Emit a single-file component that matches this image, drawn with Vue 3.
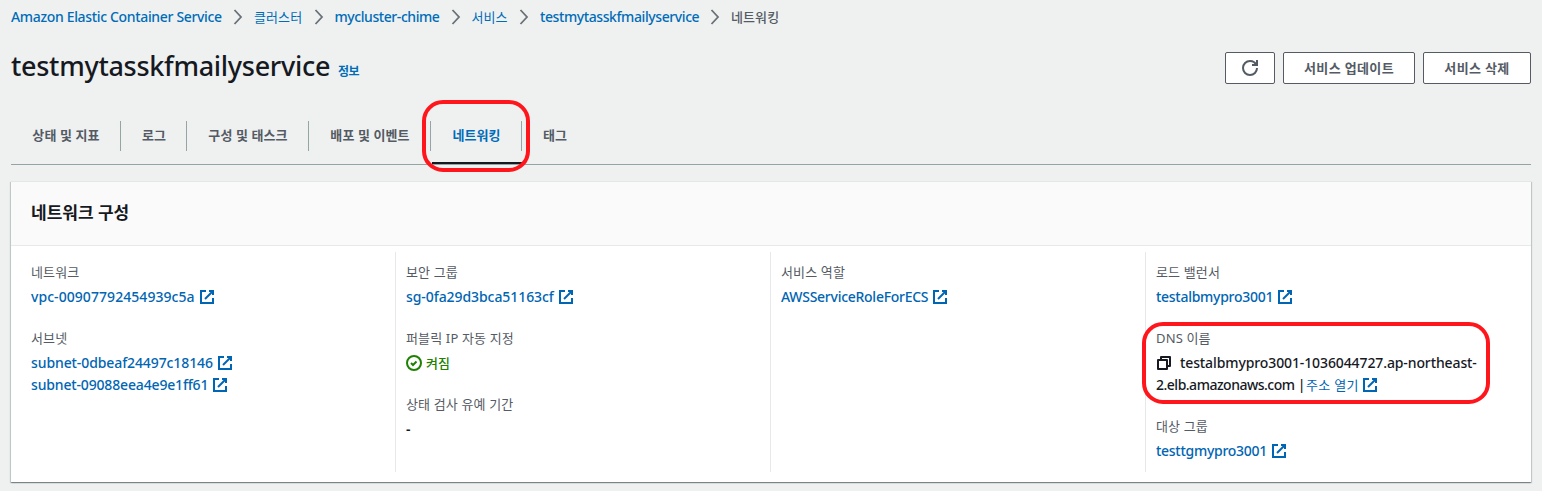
<script setup>
import { h } from 'vue'

const crumbs = [
  { text: 'Amazon Elastic Container Service', track: -0.34, width: 211 },
  { text: '클러스터', ko: true, track: 0.1, width: 48.5 },
  { text: 'mycluster-chime', track: -0.43, width: 105 },
  { text: '서비스', ko: true, track: 0.1, width: 36.5 },
  { text: 'testmytasskfmailyservice', track: -0.41, width: 159 },
  { text: '네트워킹', ko: true, track: 0.1, width: 50, current: true },
]

const tabs = [
  { text: '상태 및 지표', width: 110 },
  { text: '로그', width: 66 },
  { text: '구성 및 태스크', width: 122 },
  { text: '배포 및 이벤트', width: 122 },
  { text: '네트워킹', width: 91, active: true },
  { text: '태그', width: 66 },
]

const columns = [
  [
    { label: '네트워크', links: [{ text: 'vpc-00907792454939c5a', track: 0.06 }] },
    {
      label: '서브넷',
      links: [
        { text: 'subnet-0dbeaf24497c18146', track: -0.1 },
        { text: 'subnet-09088eea4e9e1ff61', track: -0.16 },
      ],
    },
  ],
  [
    { label: '보안 그룹', links: [{ text: 'sg-0fa29d3bca51163cf', track: -0.07 }] },
    { label: '퍼블릭 IP 자동 지정', status: '켜짐' },
    { label: '상태 검사 유예 기간', plain: '-' },
  ],
  [{ label: '서비스 역할', links: [{ text: 'AWSServiceRoleForECS', track: -0.27 }] }],
  [
    { label: '로드 밸런서', links: [{ text: 'testalbmypro3001', track: -0.28 }] },
    { label: 'DNS 이름', dns: true },
    { label: '대상 그룹', links: [{ text: 'testtgmypro3001', track: -0.28 }] },
  ],
]

const shapes = {
  external: ['M10 2h4v4', 'M6 10l8-8', 'M14 9.048V14H2V2h5'],
  refresh: ['M10 5h5V0', 'M15 8a7 7 0 0 1-14 0 7 7 0 0 1 7-7 6.87 6.87 0 0 1 6.3 4'],
  copy: ['M2 5h9v9H2z', 'M5 5V2h9v9h-3'],
  check: ['M8 1a7 7 0 1 0 0 14A7 7 0 0 0 8 1z', 'm5 8 2 2 3.521-3.521'],
  chevron: ['M4.500 1 11 8l-6.500 7'],
}
const Icon = ({ name }) =>
  h(
    'svg',
    {
      viewBox: '0 0 16 16',
      width: 16,
      height: 16,
      fill: 'none',
      stroke: 'currentColor',
      'stroke-width': name === 'chevron' ? 1.8 : 2,
      'stroke-linejoin': name === 'copy' ? 'round' : 'miter',
    },
    shapes[name].map((d) => h('path', { d })),
  )
Icon.props = ['name']

const spacing = (track) => ({ letterSpacing: `${track}px` })
</script>

<template>
  <div class="page">
    <nav class="crumbs">
      <template v-for="(c, i) in crumbs" :key="c.text">
        <Icon v-if="i" name="chevron" class="chevron" />
        <a
          class="crumb"
          :class="{ ko: c.ko, current: c.current }"
          :style="{ width: `${c.width}px`, letterSpacing: `${c.track}px` }"
          >{{ c.text }}</a
        >
      </template>
    </nav>

    <header class="head">
      <h1>testmytasskfmailyservice</h1>
      <a class="info">정보</a>
      <div class="actions">
        <button class="btn refresh"><Icon name="refresh" /></button>
        <button class="btn update">서비스 업데이트</button>
        <button class="btn remove">서비스 삭제</button>
      </div>
    </header>

    <div class="tabs">
      <div
        v-for="t in tabs"
        :key="t.text"
        class="tab"
        :class="{ active: t.active }"
        :style="{ width: `${t.width}px` }"
      >
        <span>{{ t.text }}</span>
        <i v-if="t.active" class="mark mark-tab"></i>
      </div>
    </div>

    <section class="panel">
      <div class="panel-head"><h2>네트워크 구성</h2></div>
      <div class="grid">
        <div v-for="(col, i) in columns" :key="i" class="col">
          <div v-for="f in col" :key="f.label" class="field">
            <div class="label">{{ f.label }}</div>
            <div v-for="l in f.links" :key="l.text" class="value link">
              <span :style="spacing(l.track)">{{ l.text }}</span>
              <Icon name="external" />
            </div>
            <div v-if="f.status" class="value status"><Icon name="check" /><span>{{ f.status }}</span></div>
            <div v-if="f.plain" class="value plain">{{ f.plain }}</div>
            <template v-if="f.dns">
              <div class="value dns">
                <Icon name="copy" />
                <span class="host">testalbmypro3001-1036044727.ap-northeast-</span>
              </div>
              <div class="value dns-tail">
                <span class="domain">2.elb.amazonaws.com |</span>
                <a class="open">주소 열기</a>
                <Icon name="external" class="blue" />
              </div>
              <i class="mark mark-dns"></i>
            </template>
          </div>
        </div>
      </div>
    </section>
  </div>
</template>

<style>
body {
  background: #eff1f1;
}
</style>

<style scoped>
* {
  box-sizing: border-box;
}
.page {
  height: 491px;
  padding: 0 11px;
  overflow: hidden;
  background: #eff1f1;
  color: #16191f;
  font: 500 14px/22px 'Noto Sans', 'Noto Sans CJK KR', sans-serif;
  white-space: nowrap;
}
svg {
  display: block;
  flex: none;
}
.crumbs {
  display: flex;
  align-items: center;
  height: 34px;
}
.crumb {
  flex: none;
  color: #006cb8;
}
.crumb.ko {
  font-size: 13px;
  font-weight: 400;
}
.crumb.current {
  color: #545b64;
  font-weight: 500;
}
.chevron {
  margin: 0 8px;
  color: #687078;
}
.head {
  display: flex;
  align-items: baseline;
  height: 68px;
  padding-top: 14px;
}
h1 {
  margin: 0;
  width: 327px;
  font-size: 27px;
  line-height: 36px;
  font-weight: 500;
  letter-spacing: -0.29px;
}
.info {
  color: #006cb8;
  font-size: 12px;
  font-weight: 700;
  letter-spacing: -0.5px;
}
.actions {
  display: flex;
  align-self: flex-start;
  gap: 8px;
  margin: 4px 0 0 auto;
}
.btn {
  display: flex;
  align-items: center;
  justify-content: center;
  height: 32px;
  padding: 0 0 1px;
  border: 1px solid #545b64;
  border-radius: 2px;
  background: #fff;
  color: #545b64;
  font: 700 13px/20px 'Noto Sans', 'Noto Sans CJK KR', sans-serif;
  letter-spacing: 0.35px;
}
.refresh {
  width: 50px;
  padding: 0;
}
.update {
  width: 132px;
}
.remove {
  width: 108px;
}
.tabs {
  display: flex;
  height: 63px;
  border-bottom: 1px solid #95a5a6;
  padding-top: 19px;
}
.tab {
  position: relative;
  height: 43px;
  color: #545b64;
  font-size: 13px;
  font-weight: 700;
  line-height: 29px;
  text-align: center;
  letter-spacing: 0.1px;
  background: linear-gradient(#95a5a6, #95a5a6) right top / 1px 30px no-repeat;
}
.tab:last-child {
  background: none;
}
.tab.active {
  color: #006cb8;
}
.tab.active::after {
  content: '';
  display: block;
  height: 2px;
  margin: 12px 0 0 1px;
  background: #16191f;
}
.mark {
  position: absolute;
  border: 4px solid #ff161c;
  border-radius: 21px;
}
.mark-tab {
  left: -9px;
  top: -21px;
  width: 108px;
  height: 72px;
}
.panel {
  height: 301px;
  margin-top: 16px;
  border-top: 1px solid #e2e8e8;
  background: #fff;
  box-shadow:
    0 1px 1px 0 rgba(0, 28, 36, 0.3),
    1px 1px 1px 0 rgba(0, 28, 36, 0.15),
    -1px 1px 1px 0 rgba(0, 28, 36, 0.15);
}
.panel-head {
  height: 64px;
  padding: 20px 20px 0;
  border-bottom: 1px solid #e6e9e9;
  background: #fafafa;
}
h2 {
  margin: 0;
  font-size: 17px;
  line-height: 22px;
  font-weight: 700;
}
.grid {
  display: grid;
  grid-template-columns: 384px 375px 375px 386px;
  padding-top: 6px;
}
.col {
  height: 220px;
  padding: 9px 0 0 10px;
  border-left: 1px solid #e6e9e9;
}
.col:first-child {
  padding-left: 20px;
  border-left: 0;
}
.field {
  position: relative;
  margin-bottom: 19px;
}
.label {
  margin-bottom: 3px;
  color: #545b64;
  font-size: 13px;
  font-weight: 400;
  letter-spacing: 0.15px;
}
.value {
  display: flex;
  align-items: center;
  height: 22px;
}
.link {
  gap: 4px;
  color: #0065b3;
}
.status {
  gap: 4px;
  color: #1d8102;
  font-size: 13px;
}
.plain {
  font-weight: 600;
}
.dns {
  gap: 8px;
}
.host {
  letter-spacing: -0.11px;
}
.domain {
  width: 150px;
  letter-spacing: -0.5px;
}
.open {
  width: 56px;
  color: #0065b3;
  font-size: 13px;
  font-weight: 400;
  letter-spacing: 0.3px;
}
.blue {
  color: #0065b3;
}
.mark-dns {
  left: -14px;
  top: -5px;
  width: 348px;
  height: 82px;
}
</style>
